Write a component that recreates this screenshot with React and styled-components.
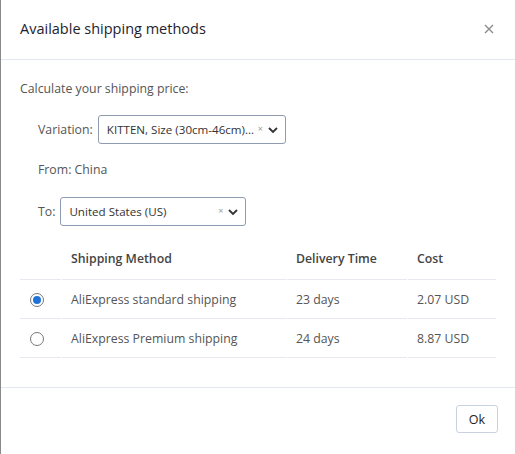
import React, { useState } from "react";
import styled, { createGlobalStyle } from "styled-components";

const Global = createGlobalStyle`
    html, body {
        margin: 0;
        padding: 0;
        background: #8a8a8a;
    }
    body {
        font-family: "Open Sans", "Liberation Sans", sans-serif;
    }
`;

const Modal = styled.div`
    margin-left: 1px;
    width: 514px;
    height: 454px;
    background: #fff;
    display: flex;
    flex-direction: column;
`;

const Header = styled.div`
    height: 60px;
    box-sizing: border-box;
    border-bottom: 1px solid #e3e8ef;
    display: flex;
    align-items: center;
    justify-content: space-between;
    padding: 0 21px 2px 19px;
`;

const Title = styled.h4`
    margin: 0;
    font-size: 14.5px;
    font-weight: 500;
    color: #1e2330;
`;

const Close = styled.button`
    border: none;
    background: none;
    padding: 0;
    color: #8c8c8c;
    cursor: pointer;
    display: flex;
    margin-top: 0;
`;

const Body = styled.div`
    flex: 1;
    padding: 20px 19px 0 19px;
    color: #555;
    font-size: 12.3px;
`;

const Intro = styled.div`
    height: 18px;
    line-height: 18px;
`;

const Field = styled.div`
    display: flex;
    align-items: center;
    gap: 5px;
    padding-left: 18px;
    margin-top: ${(p) => p.$top}px;
    height: ${(p) => p.$h || 29}px;
`;

const Select = styled.div`
    width: ${(p) => p.$w}px;
    height: 29px;
    box-sizing: border-box;
    border: 1px solid #8e9bb0;
    border-radius: 3px;
    display: flex;
    align-items: center;
    padding: 0 6px 0 8px;
    font-size: 11.6px;
    color: #333;
`;

const SelectText = styled.span`
    flex: 1;
    white-space: nowrap;
    overflow: hidden;
`;

const Clear = styled.span`
    color: #999;
    font-size: 9px;
    margin: -3px 4px 0 2px;
`;

const Table = styled.table`
    margin-top: 15px;
    width: 478px;
    border-collapse: separate;
    border-spacing: 1px 0;
    margin-left: -1px;
    font-size: 12.3px;
    color: #555;
`;

const Th = styled.th`
    text-align: left;
    font-weight: 600;
    color: #444;
    height: 39px;
    box-sizing: border-box;
    padding: 0 0 4px ${(p) => p.$pl || 9}px;
    border-bottom: 1px solid #e6eaf0;
    width: ${(p) => p.$w}px;
`;

const Td = styled.td`
    height: 39px;
    box-sizing: border-box;
    padding: 0 0 0 ${(p) => p.$pl || 9}px;
    border-bottom: 1px solid #e6eaf0;
`;

const Radio = styled.span`
    display: inline-block;
    width: 14px;
    height: 14px;
    box-sizing: border-box;
    border-radius: 50%;
    border: 1px solid #777;
    position: relative;
    vertical-align: middle;
    cursor: pointer;
    &::after {
        content: "";
        display: ${(p) => (p.$on ? "block" : "none")};
        position: absolute;
        left: 2px;
        top: 2px;
        width: 8px;
        height: 8px;
        border-radius: 50%;
        background: #1f73d8;
    }
`;

const Footer = styled.div`
    height: 67px;
    box-sizing: border-box;
    border-top: 1px solid #e3e8ef;
    display: flex;
    align-items: center;
    justify-content: flex-end;
    padding: 0 17px 4px 0;
`;

const OkButton = styled.button`
    width: 42px;
    height: 28px;
    border: 1px solid #c9d3e0;
    border-radius: 3px;
    background: #fff;
    font-family: "Open Sans", "Liberation Sans", sans-serif;
    font-size: 12.5px;
    color: #222;
    cursor: pointer;
`;

const Chevron = () => (
    <svg width="12" height="12" viewBox="0 0 12 12">
        <path d="M2 4l4 4 4-4" fill="none" stroke="#333" strokeWidth="1.8" />
    </svg>
);

const rows = [
    { name: "AliExpress standard shipping", time: "23 days", cost: "2.07 USD" },
    { name: "AliExpress Premium shipping", time: "24 days", cost: "8.87 USD" },
];

const App = () => {
    const [sel, setSel] = useState(0);
    return (
        <>
            <Global />
            <Modal>
                <Header>
                    <Title>Available shipping methods</Title>
                    <Close aria-label="Close">
                        <svg width="10" height="10" viewBox="0 0 10 10">
                            <path d="M1 1l8 8M9 1l-8 8" stroke="#8c8c8c" strokeWidth="1.4" />
                        </svg>
                    </Close>
                </Header>
                <Body>
                    <Intro>Calculate your shipping price:</Intro>
                    <Field $top={17}>
                        <span>Variation:</span>
                        <Select $w={188}>
                            <SelectText>KITTEN, Size (30cm-46cm)...</SelectText>
                            <Clear>×</Clear>
                            <Chevron />
                        </Select>
                    </Field>
                    <Field $top={11} $h={29}>
                        <span>From: China</span>
                    </Field>
                    <Field $top={13}>
                        <span>To:</span>
                        <Select $w={186}>
                            <SelectText>United States (US)</SelectText>
                            <Clear>×</Clear>
                            <Chevron />
                        </Select>
                    </Field>
                    <Table>
                        <thead>
                            <tr>
                                <Th $w={41}></Th>
                                <Th $w={224}>Shipping Method</Th>
                                <Th $w={120}>Delivery Time</Th>
                                <Th>Cost</Th>
                            </tr>
                        </thead>
                        <tbody>
                            {rows.map((r, i) => (
                                <tr key={r.name}>
                                    <Td $pl={10}>
                                        <Radio $on={sel === i} onClick={() => setSel(i)} />
                                    </Td>
                                    <Td>{r.name}</Td>
                                    <Td>{r.time}</Td>
                                    <Td>{r.cost}</Td>
                                </tr>
                            ))}
                        </tbody>
                    </Table>
                </Body>
                <Footer>
                    <OkButton>Ok</OkButton>
                </Footer>
            </Modal>
        </>
    );
};

export default App;
